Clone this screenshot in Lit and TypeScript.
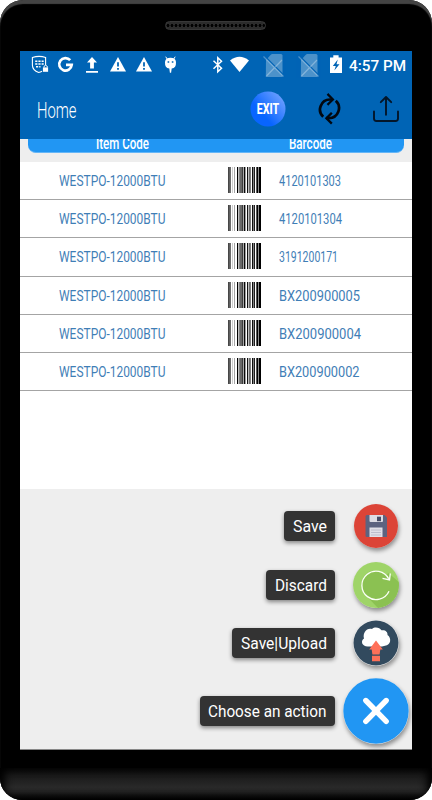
import { LitElement, html, svg, css } from "lit";
import { customElement, property } from "lit/decorators.js";

/** A line of text condensed or widened to an exact width. */
@customElement("fit-text")
class FitText extends LitElement {
  @property() text = "";
  @property({ type: Number }) width = 50;
  @property({ type: Number }) height = 20;
  @property({ type: Number }) baseline = 15;
  static styles = css`
    :host { display: block; flex: none; }
    svg { display: block; overflow: visible; }
    text { fill: currentColor; }
  `;
  render() {
    return html`<svg width=${this.width} height=${this.height}>
      <text x="0" y=${this.baseline} textLength=${this.width} lengthAdjust="spacingAndGlyphs">${this.text}</text>
    </svg>`;
  }
}

const rows: [string, number][] = [
  ["4120101303", 62],
  ["4120101304", 63],
  ["3191200171", 59],
  ["BX200900005", 81],
  ["BX200900004", 82],
  ["BX200900002", 80.5],
];

// x, width, grey level of each bar
const bars: [number, number, number][] = [
  [0, 1, 70], [1, 1, 95], [2, 1, 110], [4, 1, 205], [6, 1, 165], [9, 1, 0], [10, 1, 195], [11, 1, 130],
  [12, 2, 105], [14, 1, 60], [15, 1, 170], [16, 1, 10], [17, 1, 160], [19, 1, 20], [20, 1, 190],
  [21, 1, 110], [22, 1, 130], [24, 1, 15], [25, 1, 130], [26, 1, 30], [28, 1, 90], [29, 1, 0], [30, 1, 140], [31, 2, 0],
];

const barcode = html`<svg class="barcode" width="33" height="26" shape-rendering="crispEdges">
  ${bars.map(([x, w, g]) => svg`<rect x=${x} y="0" width=${w} height="26" fill=${`rgb(${g},${g},${g})`}/>`)}
</svg>`;

const statusIcons = html`<svg class="status" width="392" height="27" viewBox="20 51 392 27">
  <g fill="none" stroke="#fff" stroke-width="1.1">
    <path d="M42 71.300q-1.500 .9-3.300 1.200c-4-1.400-6.200-4-6.300-7.300v-7.700c4.500-1.500 9-1.500 13.200 0v7.500"/>
    <path d="M35.200 61.200h8.500M35.200 64h8.500M36 66.800h4.500" stroke-width="1.600" stroke-dasharray="2.200 1"/>
    <path d="M44 67.500v-1.200q1.700-2 3.300 0v1.200" stroke-width="1"/>
  </g>
  <rect x="42.900" y="67.400" width="5.200" height="4.400" fill="#fff"/>
  <path d="M70.200 60.200A6.250 6.250 0 1 0 71.700 64.900H66" fill="none" stroke="#fff" stroke-width="2.700"/>
  <path d="M92 57l5 5.400h-3.100v6.100h-3.800v-6.100H87zM86 71h12v1.800H86z" fill="#fff"/>
  ${[118, 144].map((x) => svg`<g transform=${`translate(${x} 57)`}>
    <path d="M0 0l8 14.500H-8z" fill="#fff"/><path d="M-.9 5.200H.9v4.400H-.9zM-.9 11H.9v1.800H-.9z" fill="#0064b5"/></g>`)}
  <path d="M167.200 59l-1.500-2.300M173.700 59l1.500-2.300" fill="none" stroke="#fff"/>
  <path d="M165 62q.5-4.200 5.500-4.200T176 62q.3 6-4.300 6.500l-.6 4.300h-1.200l-.6-4.300Q164.700 68 165 62z" fill="#fff"/>
  <path d="M167.600 62h1.600M171.800 62h1.600" stroke="#0064b5" stroke-width="1.500"/>
  <path d="M213.500 60.800l8 7.400-3.700 3.600V57.700l3.700 3.600-8 7.400" fill="none" stroke="#fff" stroke-width="1.500"/>
  <path d="M230 60.500q9.500-7.500 19 0L239.500 72z" fill="#fff"/>
  ${[264, 299].map((x) => svg`<g transform=${`translate(${x} 54)`}>
    <path d="M2 6l5-5.500q.6-.5 1.300-.5H17q1.500 0 1.500 1.500V23H1.800z" fill="#fff" opacity=".3"/>
    <path d="M.5 2L20 21.500" stroke="#0064b5" stroke-width="1.400"/><path d="M-.5 2.500L19.500 22.500M2.500 22L18 6" stroke="#fff" opacity=".3" stroke-width="1.200"/></g>`)}
  <path d="M333.300 55.300h5.300v2.200h3.400V73H330V57.500h3.300z" fill="#fff"/>
  <path d="M337.800 59.600l-5 6.500h3l-1.500 4.500 5.200-6.300h-3z" fill="#0064b5"/>
</svg>`;

const exitIcon = html`<svg width="36" height="36" viewBox="0 0 36 36">
  <defs><linearGradient id="e" x1=".15" y1=".8" x2=".9" y2=".15"><stop offset=".25" stop-color="#0865ff"/><stop offset="1" stop-color="#6a9eff"/></linearGradient></defs>
  <circle cx="18" cy="18" r="17.500" fill="url(#e)"/>
  <text class="exit" x="6.700" y="23.200" textLength="22.500" lengthAdjust="spacingAndGlyphs">EXIT</text></svg>`;

const syncIcon = html`<svg width="24" height="32" viewBox="317 94 24 32" fill="none" stroke="#020810" stroke-width="2.700">
  <path d="M323.200 117.800a10 10 0 0 1 6.700-17.300h3M335.800 101.800a10 10 0 0 1-6.700 17.300h-3"/>
  <path d="M328.300 95.700l4.600 4.800-4.600 4.500M331 114.600l-4.600 4.600 4.600 4.600" stroke-linecap="square" stroke-width="2.300"/></svg>`;

const uploadIcon = html`<svg width="28" height="28" viewBox="372 95 28 28" fill="none" stroke="#03162a" stroke-width="1.900" stroke-linecap="round" stroke-linejoin="round">
  <path d="M374 111.500v7q0 2.500 2.500 2.500h19q2.500 0 2.500-2.500v-7M386 114.700V97.300M380.800 102.200l5.200-5.200 5.200 5.200"/></svg>`;

const saveIcon = html`<svg width="44" height="44" viewBox="0 0 44 44">
  <circle cx="22" cy="22" r="22" fill="#dc4437"/>
  <path d="M13 11h17.500l2.500 2.500V33H13q-1.500 0-1.500-1.500v-19Q11.500 11 13 11z" fill="#5c6380"/>
  <path d="M15.500 11H29v6q0 1-1 1H16.500q-1 0-1-1z" fill="#dcdce4"/><path d="M23 12.700h4v4.500h-4z" fill="#464c66"/>
  <path d="M15.500 23.500h13V33h-13z" fill="#e0e0e8"/><path d="M17 26h10M17 28.500h10M17 31h10" stroke="#b9bac9" stroke-width=".9"/></svg>`;

const discardIcon = html`<svg width="46" height="46" viewBox="0 0 46 46">
  <circle cx="23" cy="23" r="23" fill="#9fd468"/>
  <path d="M35.500 11L45.700 20A23 23 0 0 1 25 46L12.500 33z" fill="#8bc152"/><circle cx="22.500" cy="22.700" r="14.200" fill="#8bc152"/>
  <path d="M36 29.200A14.200 14.200 0 1 1 35.700 16.800M37.300 11.500l-.8 6.400-7-1.500" fill="none" stroke="#fafff5" stroke-width="1.350"/></svg>`;

const cloudIcon = html`<svg width="46" height="46" viewBox="0 0 46 46">
  <circle cx="23" cy="23" r="22.500" fill="#324a5e"/>
  <path d="M15 26.500c-6 .2-7.800-5.500-4-8-1.500-6 3-11.200 8-9.500 3-2.700 8-1.200 9.500 1.300 4-.6 6.300 1.700 6 4.700 4.500 3 3.200 10.500-2.500 10.700l-3 .8H17z" fill="#fff"/>
  <path d="M23 20.500l6.800 9h-2.500l-.7 5H19.400l-.7-5h-2.500zM19 35.700h8v5.500h-8z" fill="#ff7058"/></svg>`;

const closeIcon = html`<svg width="66" height="66" viewBox="0 0 66 66">
  <circle cx="33" cy="33" r="32.700" fill="#2196f3"/>
  <path d="M22.800 22.500l20.400 20.800M43.200 22.500l-20.400 20.800" stroke="#fff" stroke-width="5.400" stroke-linecap="round"/></svg>`;

@customElement("app-root")
class AppRoot extends LitElement {
  static styles = css`
    :host { display: block; width: 432px; height: 800px; background: #fff; font-family: Roboto, sans-serif; }
    svg { display: block; flex: none; }
    .phone { box-sizing: border-box; width: 432px; height: 800px; background: #000; border-radius: 23px 23px 22px 22px; overflow: hidden; display: flex; flex-direction: column; box-shadow: inset 0 4px 1px #444; }
    .top { height: 51px; flex: none; }
    .speaker { box-sizing: border-box; width: 101px; height: 9px; margin: 21px 0 0 165px; border: 1px solid #383838; border-radius: 5px; background: radial-gradient(circle, #000 1.100px, #2b2b2b 1.800px) 0 0 / 4px 7px; }
    .screen { margin: 0 20px; width: 392px; height: 699px; flex: none; background: #eee; display: flex; flex-direction: column; box-sizing: border-box; border-bottom: 1px solid #888; }
    .statusbar { position: relative; height: 27px; background: #0064b5; flex: none; color: #fff; }
    .clock { position: absolute; left: 328.500px; top: 0; font-size: 15.500px; font-weight: 500; }
    .appbar { height: 61px; flex: none; background: #0064b5; display: flex; align-items: center; color: #fff; }
    .title { margin-left: 17px; font-size: 22px; font-weight: 300; }
    .exiticon { margin-left: 173.500px; }
    .syncicon { margin-left: 31px; }
    .upicon { margin-left: 31px; }
    .exit { font-size: 14.500px; font-weight: 800; fill: #fff; }
    .headwrap { height: 23px; flex: none; padding: 0 8px; overflow: hidden; }
    .head { box-sizing: border-box; height: 14px; background: #2196f3; border-bottom: 1px solid #65b6f7; border-radius: 0 0 8px 8px; display: flex; color: #fff; font-size: 17px; font-weight: 500; overflow: hidden; }
    .head .a { margin-left: 68px; } .head .b { margin-left: 140px; }
    .list { height: 327px; flex: none; background: #fff; }
    .row { box-sizing: border-box; height: 38.200px; border-bottom: 1px solid #a4a4a4; display: flex; color: #3f7eb6; font-size: 14.800px; }
    .row .code { margin-left: 39px; }
    .barcode { margin: 5px 0 0 62.500px; }
    .row .num { margin-left: 18px; }
    .actions { flex: 1; display: flex; flex-direction: column; }
    .action { display: flex; align-items: center; justify-content: flex-end; }
    .label { box-sizing: border-box; height: 30px; padding: 0 8.500px; border-radius: 4px; background: #333; color: #fff; font-size: 16px; box-shadow: 0 2px 4px rgba(0,0,0,.45); }
    .fab { border-radius: 50%; box-shadow: 1px 3px 4px rgba(0,0,0,.4); }
    .s1 { margin: 15px 14px 0 0; gap: 19px; height: 44px; }
    .s2 { margin: 14px 13px 0 0; gap: 18px; height: 46px; }
    .s3 { margin: 12px 13px 0 0; gap: 18px; height: 46px; }
    .s4 { margin: 12px 3px 0 0; gap: 8px; height: 66px; }
    .bottom { margin-top: auto; height: 32px; flex: none; background: linear-gradient(#101010, #292929 60%, #222 75%, #050505); box-shadow: inset 5px 0 8px #000, inset -5px 0 8px #000; }
  `;

  action(cls: string, text: string, width: number, icon: unknown) {
    return html`<div class="action ${cls}">
      <div class="label"><fit-text text=${text} width=${width} height="30" baseline="21"></fit-text></div>
      <div class="fab">${icon}</div>
    </div>`;
  }

  render() {
    return html`<div class="phone">
      <div class="top"><div class="speaker"></div></div>
      <div class="screen">
        <div class="statusbar">${statusIcons}<fit-text class="clock" text="4:57 PM" width="57" height="27" baseline="20"></fit-text></div>
        <div class="appbar">
          <fit-text class="title" text="Home" width="39.500" height="30" baseline="23.500"></fit-text>
          <div class="exiticon">${exitIcon}</div><div class="syncicon">${syncIcon}</div><div class="upicon">${uploadIcon}</div>
        </div>
        <div class="headwrap"><div class="head">
          <fit-text class="a" text="Item Code" width="53" height="14" baseline="9.700"></fit-text>
          <fit-text class="b" text="Barcode" width="43" height="14" baseline="9.700"></fit-text>
        </div></div>
        <div class="list">${rows.map(([n, w]) => html`<div class="row">
          <fit-text class="code" text="WESTPO-12000BTU" width="106.500" height="37" baseline="24.200"></fit-text>
          ${barcode}
          <fit-text class="num" text=${n} width=${w} height="37" baseline="24.200"></fit-text>
        </div>`)}</div>
        <div class="actions">
          ${this.action("s1", "Save", 34, saveIcon)}
          ${this.action("s2", "Discard", 52, discardIcon)}
          ${this.action("s3", "Save|Upload", 86, cloudIcon)}
          ${this.action("s4", "Choose an action", 118.5, closeIcon)}
        </div>
      </div>
      <div class="bottom"></div>
    </div>`;
  }
}
